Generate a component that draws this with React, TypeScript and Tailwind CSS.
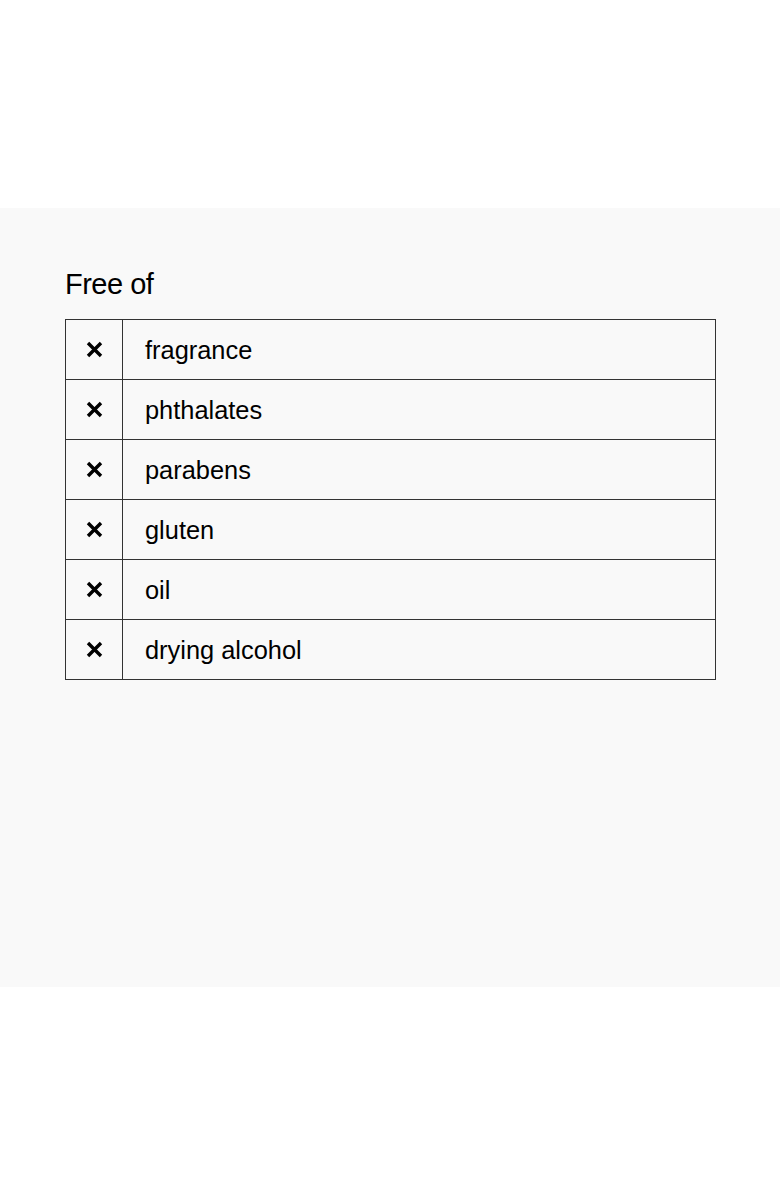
const items = ['fragrance', 'phthalates', 'parabens', 'gluten', 'oil', 'drying alcohol'];

export default function App() {
  return (
    <div className="min-h-[1196px] bg-white font-['Liberation_Sans',Arial,sans-serif] text-black">
      <div className="h-[208px]" />
      <section className="h-[779px] bg-[#f9f9f9] px-[65px] pt-[58px]">
        <h2 className="text-[29px] leading-[36px] tracking-[-0.5px] text-black">Free of</h2>
        <table className="mt-[17px] w-[651px] border-collapse border border-[#333]">
          <tbody>
            {items.map(item => (
              <tr key={item} className="h-[60px] border-b border-[#333]">
                <td className="w-[57px] border-r border-[#333] text-center align-middle">
                  <svg className="mx-auto block h-[17px] w-[17px]" viewBox="0 0 17 17">
                    <path d="M2 2 L15 15 M15 2 L2 15" stroke="#000" strokeWidth="3.4" strokeLinecap="butt" />
                  </svg>
                </td>
                <td className="pl-[22px] align-middle text-[25.4px] leading-[30px]">{item}</td>
              </tr>
            ))}
          </tbody>
        </table>
      </section>
    </div>
  );
}
